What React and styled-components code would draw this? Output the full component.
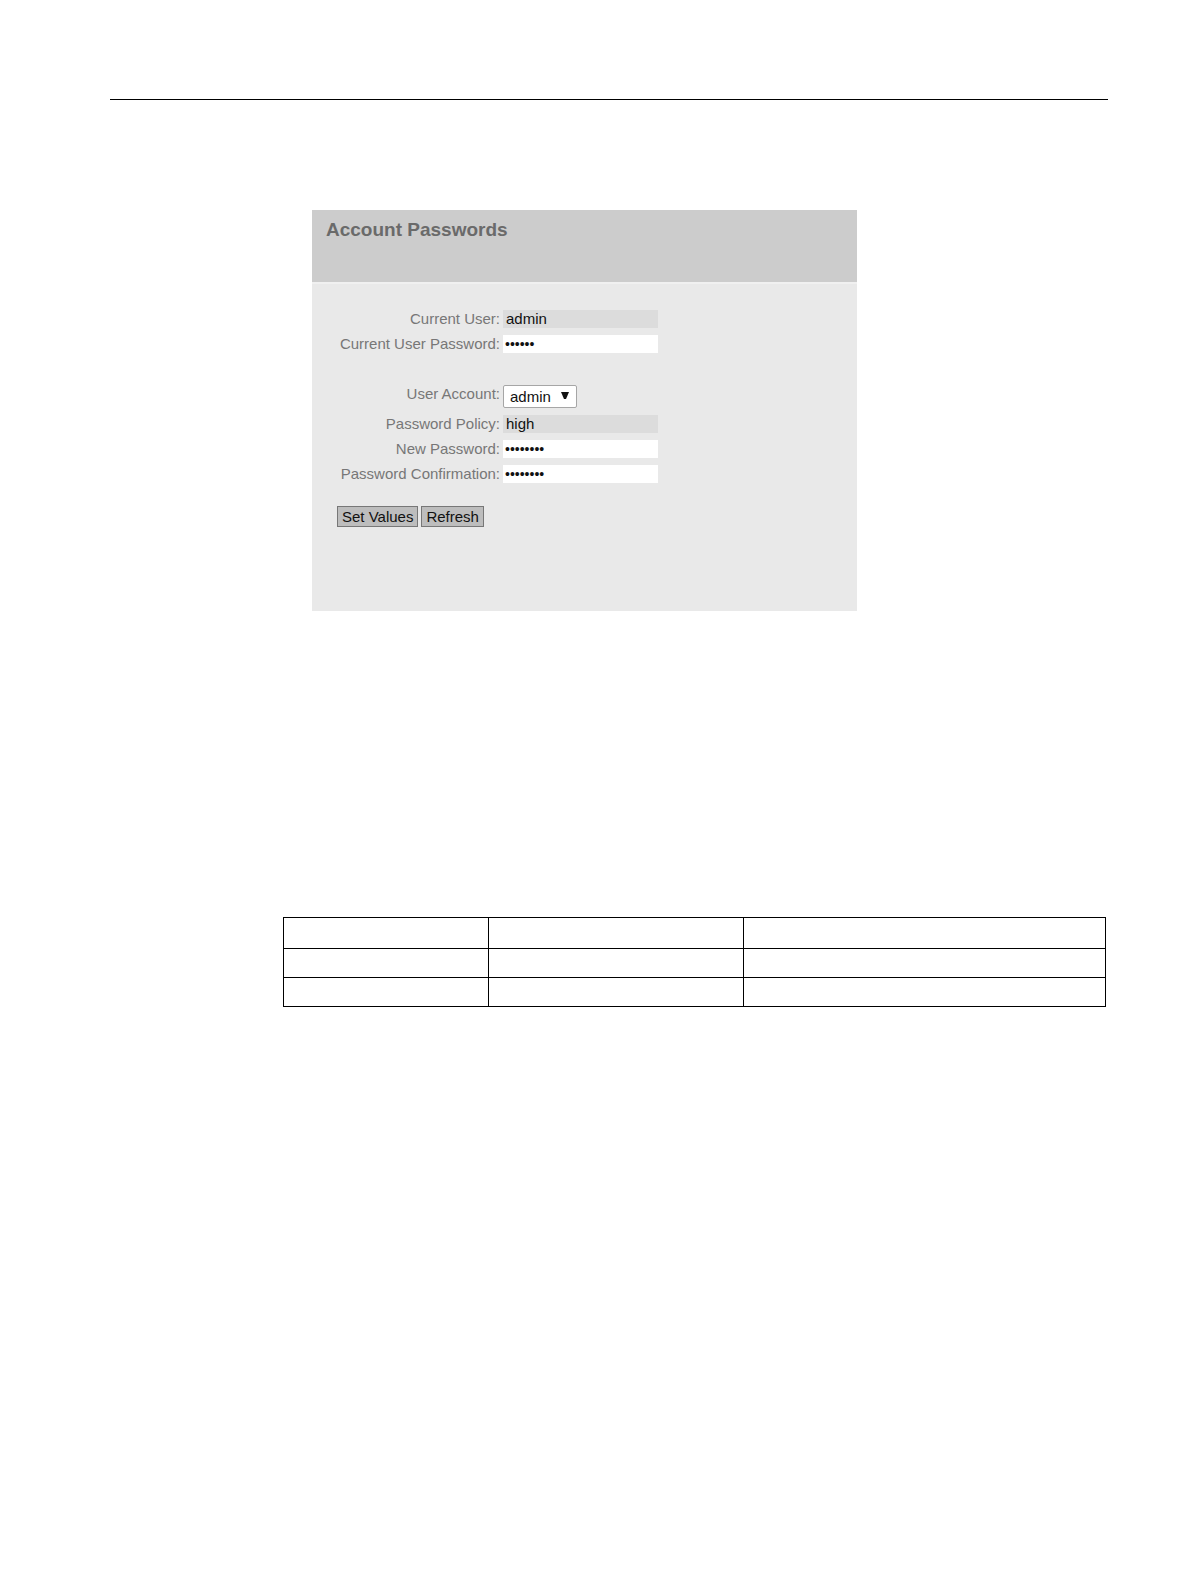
import React, { useState } from 'react';
import styled, { createGlobalStyle } from 'styled-components';

const initialValues = {
  currentUser: 'admin',
  currentPassword: 'secret',
  account: 'admin',
  policy: 'high',
  newPassword: 'password',
  confirmation: 'password',
};

const tableRows = ['head', 'first', 'second'];

const App = () => {
  const [values, setValues] = useState(initialValues);

  const handleChange = (event) => {
    const { name, value } = event.target;
    setValues({ ...values, [name]: value });
  };

  const handleSubmit = (event) => {
    event.preventDefault();
  };

  return (
    <>
      <GlobalStyle />
      <Page>
        <Panel>
          <PanelHeader>
            <Title>Account Passwords</Title>
          </PanelHeader>
          <Form onSubmit={handleSubmit}>
            <Fields>
              <Label htmlFor="currentUser">Current User:</Label>
              <Field id="currentUser" name="currentUser" value={values.currentUser} readOnly />
              <Label htmlFor="currentPassword">Current User Password:</Label>
              <PasswordField
                id="currentPassword"
                name="currentPassword"
                type="password"
                value={values.currentPassword}
                onChange={handleChange}
              />
            </Fields>
            <Fields>
              <Label htmlFor="account">User Account:</Label>
              <SelectBox>
                <Select id="account" name="account" value={values.account} onChange={handleChange}>
                  <option value="admin">admin</option>
                  <option value="user">user</option>
                </Select>
                <Arrow viewBox="0 0 8 8" aria-hidden="true">
                  <path d="M0 0h8L5 7H3z" />
                </Arrow>
              </SelectBox>
              <Label htmlFor="policy">Password Policy:</Label>
              <Field id="policy" name="policy" value={values.policy} readOnly />
              <Label htmlFor="newPassword">New Password:</Label>
              <PasswordField
                id="newPassword"
                name="newPassword"
                type="password"
                value={values.newPassword}
                onChange={handleChange}
              />
              <Label htmlFor="confirmation">Password Confirmation:</Label>
              <PasswordField
                id="confirmation"
                name="confirmation"
                type="password"
                value={values.confirmation}
                onChange={handleChange}
              />
            </Fields>
            <Actions>
              <Button type="submit">Set Values</Button>
              <Button type="button" onClick={() => setValues(initialValues)}>Refresh</Button>
            </Actions>
          </Form>
        </Panel>
        <TableArea>
          <Table>
            <colgroup>
              <Column $width="205px" />
              <Column $width="255px" />
              <Column />
            </colgroup>
            <tbody>
              {tableRows.map(row => (
                <Row key={row} $head={row === 'head'}>
                  <Cell />
                  <Cell />
                  <Cell />
                </Row>
              ))}
            </tbody>
          </Table>
        </TableArea>
      </Page>
    </>
  );
};

const GlobalStyle = createGlobalStyle`
  * {
    box-sizing: border-box;
  }

  body {
    margin: 0;
    background: #fff;
    font-family: 'Liberation Sans', Arial, sans-serif;
    font-size: 15px;
  }

  input, select, button {
    font: inherit;
    color: #111;
  }
`;

const Page = styled.main`
  min-height: calc(100vh - 99px);
  margin: 99px 83px 0 110px;
  padding-top: 110px;
  border-top: 1px solid #000;
`;

const Panel = styled.section`
  max-width: 545px;
  margin-left: 202px;
  background: #e9e9e9;
`;

const PanelHeader = styled.header`
  height: 74px;
  padding: 8px 14px;
  background: #ccc;
  border-bottom: 2px solid #f0f0f0;
`;

const Title = styled.h1`
  margin: 0;
  color: #6a6a6a;
  font-size: 19px;
  line-height: 24px;
`;

const Form = styled.form`
  display: flex;
  flex-direction: column;
  gap: 32px;
  padding: 26px 25px 84px;
`;

const Fields = styled.div`
  display: grid;
  grid-template-columns: 163px 155px;
  column-gap: 3px;
  row-gap: 7px;
  align-items: start;
`;

const Label = styled.label`
  color: #777;
  line-height: 18px;
  text-align: right;
  white-space: nowrap;
`;

const Field = styled.input`
  width: 100%;
  height: 18px;
  padding: 0 3px 1px;
  border: none;
  border-radius: 0;
  background: ${props => (props.readOnly ? '#dcdcdc' : '#fff')};
`;

const PasswordField = styled(Field)`
  padding: 0 2px;
  font-size: 14px;
`;

const SelectBox = styled.div`
  position: relative;
  width: 74px;
`;

const Select = styled.select`
  display: block;
  appearance: none;
  width: 100%;
  height: 23px;
  padding: 0 6px;
  border: 1px solid #a6a6a6;
  border-radius: 2px;
  background: #fff;
`;

const Arrow = styled.svg`
  position: absolute;
  top: 7px;
  right: 8px;
  width: 8px;
  height: 8px;
  fill: #111;
  pointer-events: none;
`;

const Actions = styled.div`
  display: flex;
  gap: 3px;
  margin-top: -9px;
`;

const Button = styled.button`
  height: 21px;
  padding: 0 4px;
  border: 1px solid #777;
  border-radius: 0;
  background: #bdbdbd;
  line-height: 18px;
  cursor: pointer;
`;

const TableArea = styled.div`
  margin: 306px 2px 0 173px;
`;

const Table = styled.table`
  width: 100%;
  border-collapse: collapse;
  table-layout: fixed;
`;

const Column = styled.col`
  width: ${props => props.$width || 'auto'};
`;

const Row = styled.tr`
  height: ${props => (props.$head ? '31px' : '29px')};
`;

const Cell = styled.td`
  padding: 0;
  border: 1px solid #000;
`;

export default App;
